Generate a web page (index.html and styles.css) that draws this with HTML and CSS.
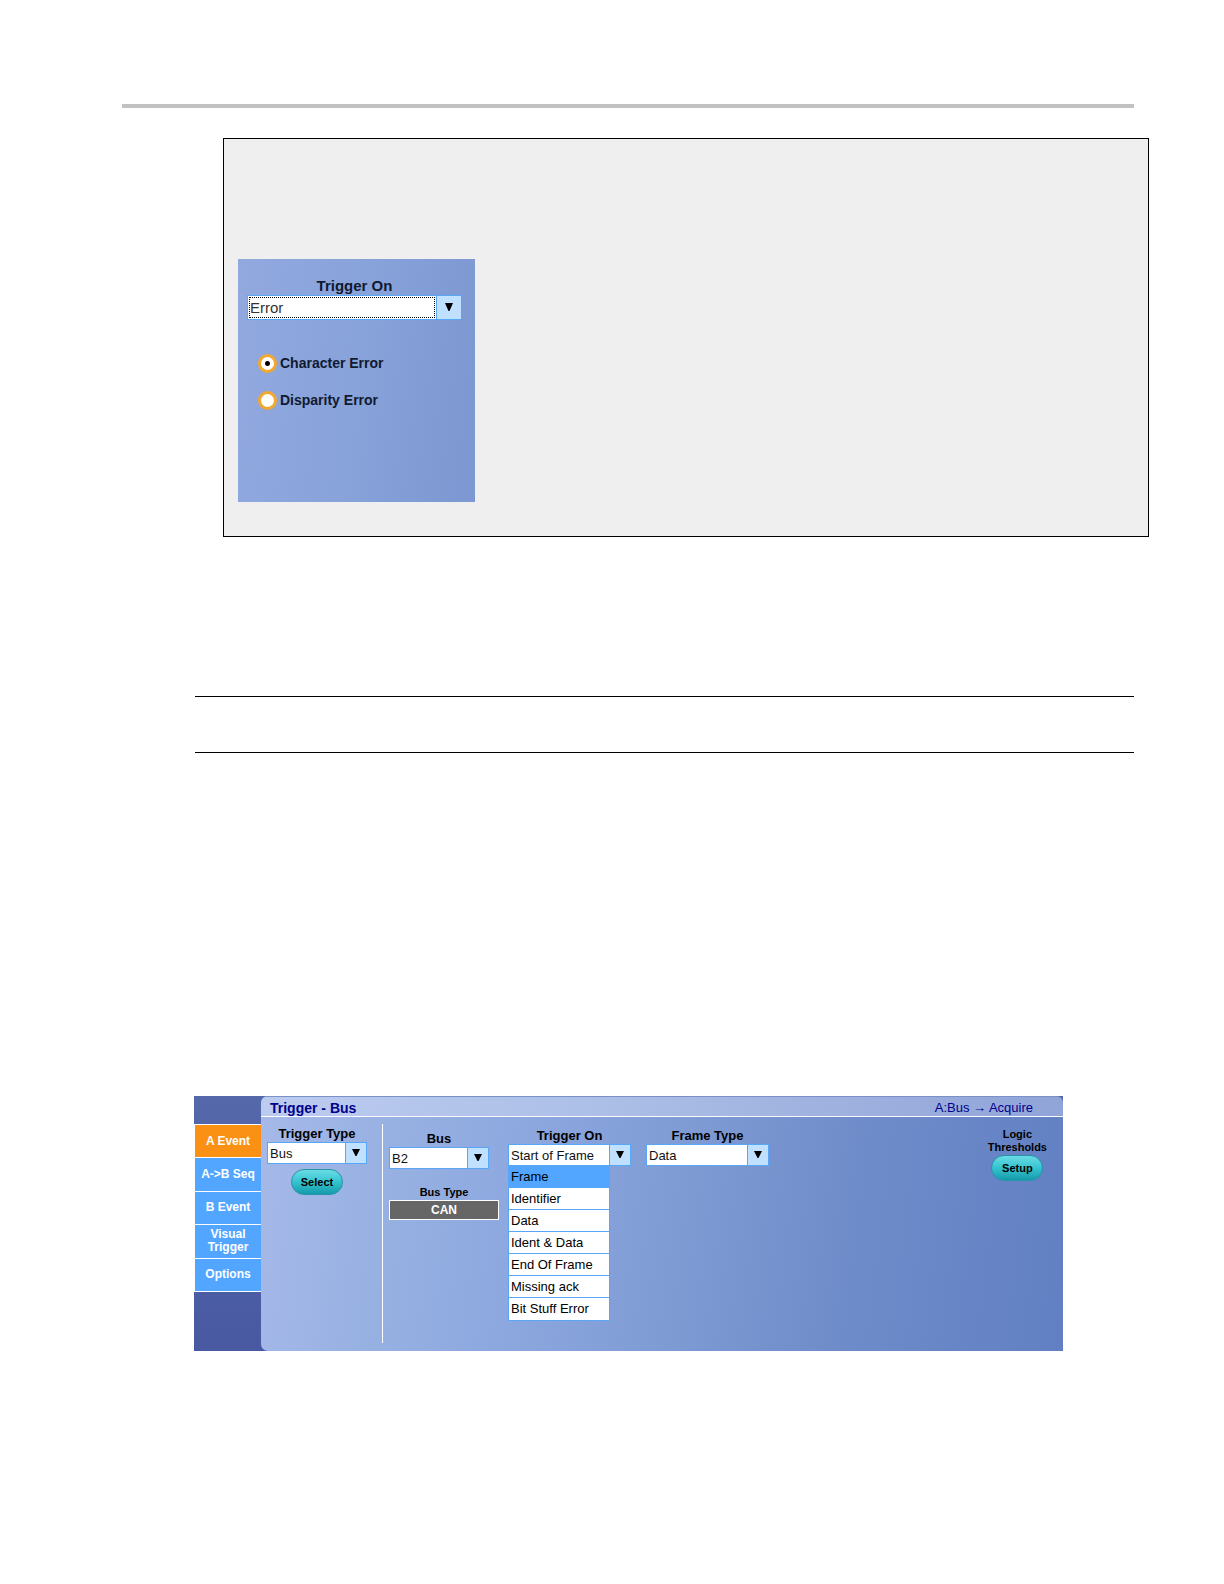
FILE: index.html
```html
<!DOCTYPE html>
<html lang="en">
<head>
    <meta charset="UTF-8">
    <meta name="viewport" content="width=device-width, initial-scale=1.0">
    <title>Trigger - Bus</title>
    <link rel="stylesheet" href="styles.css">
</head>
<body>
    <hr class="page-rule">
    <section class="example">
        <div class="error-panel">
            <label class="caption large" for="errorOn">Trigger On</label>
            <div class="combo tall">
                <select id="errorOn" class="focused">
                    <option>Error</option>
                </select>
                <span class="arrow"><svg width="10" height="9" viewBox="0 0 10 9"><path d="M1 0H9L5.5 8H4.5Z"/></svg></span>
            </div>
            <div class="radios">
                <label><input type="radio" name="error" checked>Character Error</label>
                <label><input type="radio" name="error">Disparity Error</label>
            </div>
        </div>
    </section>

    <div class="note"></div>

    <section class="scope">
        <!-- left tabs -->
        <nav class="tabs">
            <button class="active">A Event</button>
            <button>A-&gt;B Seq</button>
            <button>B Event</button>
            <button>Visual<br>Trigger</button>
            <button>Options</button>
        </nav>
        <div class="panel">
            <header class="panel-head">
                <h1>Trigger - Bus</h1>
                <span>A:Bus → Acquire</span>
            </header>
            <div class="panel-body">
                <div class="type-col">
                    <label class="caption" for="trigType">Trigger Type</label>
                    <div class="combo">
                        <select id="trigType"><option>Bus</option></select>
                        <span class="arrow"><svg width="8" height="8" viewBox="0 0 8 8"><path d="M0 0H8L4.5 7H3.5Z"/></svg></span>
                    </div>
                    <button class="pill">Select</button>
                </div>
                <div class="bus-col">
                    <label class="caption" for="bus">Bus</label>
                    <div class="combo">
                        <select id="bus"><option>B2</option></select>
                        <span class="arrow"><svg width="8" height="8" viewBox="0 0 8 8"><path d="M0 0H8L4.5 7H3.5Z"/></svg></span>
                    </div>
                    <label class="caption small" for="busType">Bus Type</label>
                    <output class="readout" id="busType">CAN</output>
                </div>
                <div class="field-col">
                    <label class="caption" for="trigOn">Trigger On</label>
                    <div class="combo">
                        <select id="trigOn"><option>Start of Frame</option></select>
                        <span class="arrow"><svg width="8" height="8" viewBox="0 0 8 8"><path d="M0 0H8L4.5 7H3.5Z"/></svg></span>
                        <!-- opened list -->
                        <ul class="menu" role="listbox">
                            <li class="current" role="option">Frame</li>
                            <li role="option">Identifier</li>
                            <li role="option">Data</li>
                            <li role="option">Ident &amp; Data</li>
                            <li role="option">End Of Frame</li>
                            <li role="option">Missing ack</li>
                            <li role="option">Bit Stuff Error</li>
                        </ul>
                    </div>
                </div>
                <div class="field-col">
                    <label class="caption" for="frameType">Frame Type</label>
                    <div class="combo">
                        <select id="frameType"><option>Data</option></select>
                        <span class="arrow"><svg width="8" height="8" viewBox="0 0 8 8"><path d="M0 0H8L4.5 7H3.5Z"/></svg></span>
                    </div>
                </div>
                <div class="logic-col">
                    <span class="caption small">Logic<br>Thresholds</span>
                    <button class="pill">Setup</button>
                </div>
            </div>
        </div>
    </section>
</body>
</html>
```
FILE: styles.css
```css
* {
    box-sizing: border-box;
}

body {
    margin: 0;
    padding: 104px 90px 232px 122px;
    background-color: #fff;
    font-family: "Liberation Sans", Arial, sans-serif;
    font-size: 13px;
    color: #000;
}

button, select {
    font-family: inherit;
}

.page-rule {
    height: 4px;
    margin: 0;
    border: 0;
    background-color: #c1c1c1;
}

.example {
    margin: 30px -15px 0 101px;
    padding: 120px 14px 34px;
    border: 1px solid #000;
    background-color: #efefef;
}

.error-panel {
    width: 237px;
    height: 243px;
    padding: 18px 13px 0 9px;
    background: linear-gradient(97deg, #91a9df, #88a2da 50%, #7c97d1);
    color: #101a30;
}

/* headings above the fields */
.caption {
    display: block;
    font-weight: bold;
    font-size: 13px;
    line-height: 16px;
    text-align: center;
}

.caption.large {
    font-size: 15px;
    line-height: 18px;
}

.caption.small {
    font-size: 11px;
    line-height: 13px;
}

/* drop-down */
.combo {
    position: relative;
    display: grid;
    grid-template-columns: 1fr 20px;
    gap: 1px;
    height: 22px;
    border: 1px solid #58a6f6;
    background-color: #58a6f6;
}

.combo select {
    appearance: none;
    min-width: 0;
    padding: 0 2px;
    border: 0;
    border-radius: 0;
    background-color: #fff;
    color: #111;
    font-size: 13px;
}

.combo.tall {
    grid-template-columns: 1fr 24px;
    height: 25px;
}

.combo .focused {
    padding: 0 2px;
    outline: 1px dotted #000;
    outline-offset: -2px;
    color: #333;
    font-size: 15px;
}

.arrow {
    display: flex;
    align-items: center;
    justify-content: center;
    background-color: #bfe0ff;
}

.radios {
    display: flex;
    flex-direction: column;
    gap: 17px;
    padding: 33px 0 0 11px;
}

.radios label {
    display: flex;
    align-items: center;
    gap: 3px;
    height: 20px;
    font-size: 14px;
    font-weight: bold;
}

.radios input {
    appearance: none;
    width: 19px;
    height: 19px;
    margin: 0;
    border: 3px solid #f0a830;
    border-radius: 50%;
    background-color: #fff;
}

.radios input:checked {
    background: radial-gradient(circle, #000 2px, #fff 3px);
}

.note {
    height: 57px;
    margin: 159px 0 343px 73px;
    border-top: 1px solid #000;
    border-bottom: 1px solid #000;
}

/* oscilloscope control window */
.scope {
    display: flex;
    height: 255px;
    margin: 0 71px 0 72px;
    background: linear-gradient(#5568aa, #4859a2);
}

.tabs {
    display: grid;
    grid-template-rows: repeat(5, 1fr);
    flex: 0 0 67px;
    gap: 1px;
    height: 168px;
    margin-top: 28px;
    padding: 1px 0 1px 1px;
    background-color: #fff;
}

.tabs button {
    padding: 0;
    border: 0;
    background-color: #52a6ff;
    color: #fff;
    font-size: 12px;
    font-weight: bold;
    line-height: 13px;
}

.tabs .active {
    background-color: #fa9014;
}

.panel {
    flex: 1;
    min-width: 0;
    border-radius: 7px 7px 0 7px;
    overflow: hidden;
    background: linear-gradient(97deg, #a6b9e9, #97b1e2 16%, #8da8df 32%, #7f9bd4 52%, #6e8bc9 74%, #6180c3);
}

.panel-head {
    display: flex;
    align-items: center;
    justify-content: space-between;
    height: 21px;
    padding: 2px 30px 0 9px;
    border-top: 1px solid #7a91c8;
    border-bottom: 1px solid #fff;
    background: linear-gradient(90deg, #bccbf0, #adc0e7 40%, #91a4d8);
    color: #00008c;
}

.panel-head h1 {
    margin: 0;
    font-size: 14px;
}

.panel-head span {
    font-size: 13px;
}

.panel-body {
    display: flex;
    height: 234px;
    padding: 7px 16px 8px 6px;
}

.type-col {
    display: flex;
    flex-direction: column;
    width: 116px;
    padding: 2px 15px 0 0;
    border-right: 1px solid #fff;
}

.bus-col {
    width: 110px;
    margin-left: 6px;
    padding-top: 7px;
}

.bus-col .combo {
    width: 100px;
}

.bus-col .caption {
    width: 100px;
}

.bus-col .caption.small {
    width: 110px;
    margin-top: 17px;
}

.readout {
    display: block;
    height: 20px;
    margin-top: 1px;
    border: 1px solid #fff;
    background-color: #666;
    color: #fff;
    font-size: 12px;
    font-weight: bold;
    line-height: 18px;
    text-align: center;
}

.field-col {
    width: 123px;
    margin-left: 9px;
    padding-top: 4px;
}

.field-col + .field-col {
    margin-left: 15px;
}

.menu {
    position: absolute;
    top: 21px;
    left: -1px;
    right: 20px;
    margin: 0;
    padding: 0;
    list-style: none;
    border: 1px solid #58a6f6;
    border-top: 0;
    background-color: #fff;
}

.menu li {
    height: 22px;
    padding: 0 2px;
    border-bottom: 1px solid #58a6f6;
    line-height: 21px;
}

.menu li:last-child {
    border-bottom: 0;
}

.menu .current {
    background-color: #52a6ff;
}

.pill {
    align-self: center;
    width: 52px;
    height: 26px;
    margin-top: 5px;
    padding: 0;
    border: 1px solid #2794a8;
    border-radius: 13px;
    background: linear-gradient(#6adbe4, #35c3d0 50%, #159bab);
    color: #000;
    font-size: 11px;
    font-weight: bold;
}

.logic-col {
    display: flex;
    flex-direction: column;
    margin-left: auto;
    padding-top: 4px;
}

.logic-col .pill {
    margin-top: 1px;
}
```
